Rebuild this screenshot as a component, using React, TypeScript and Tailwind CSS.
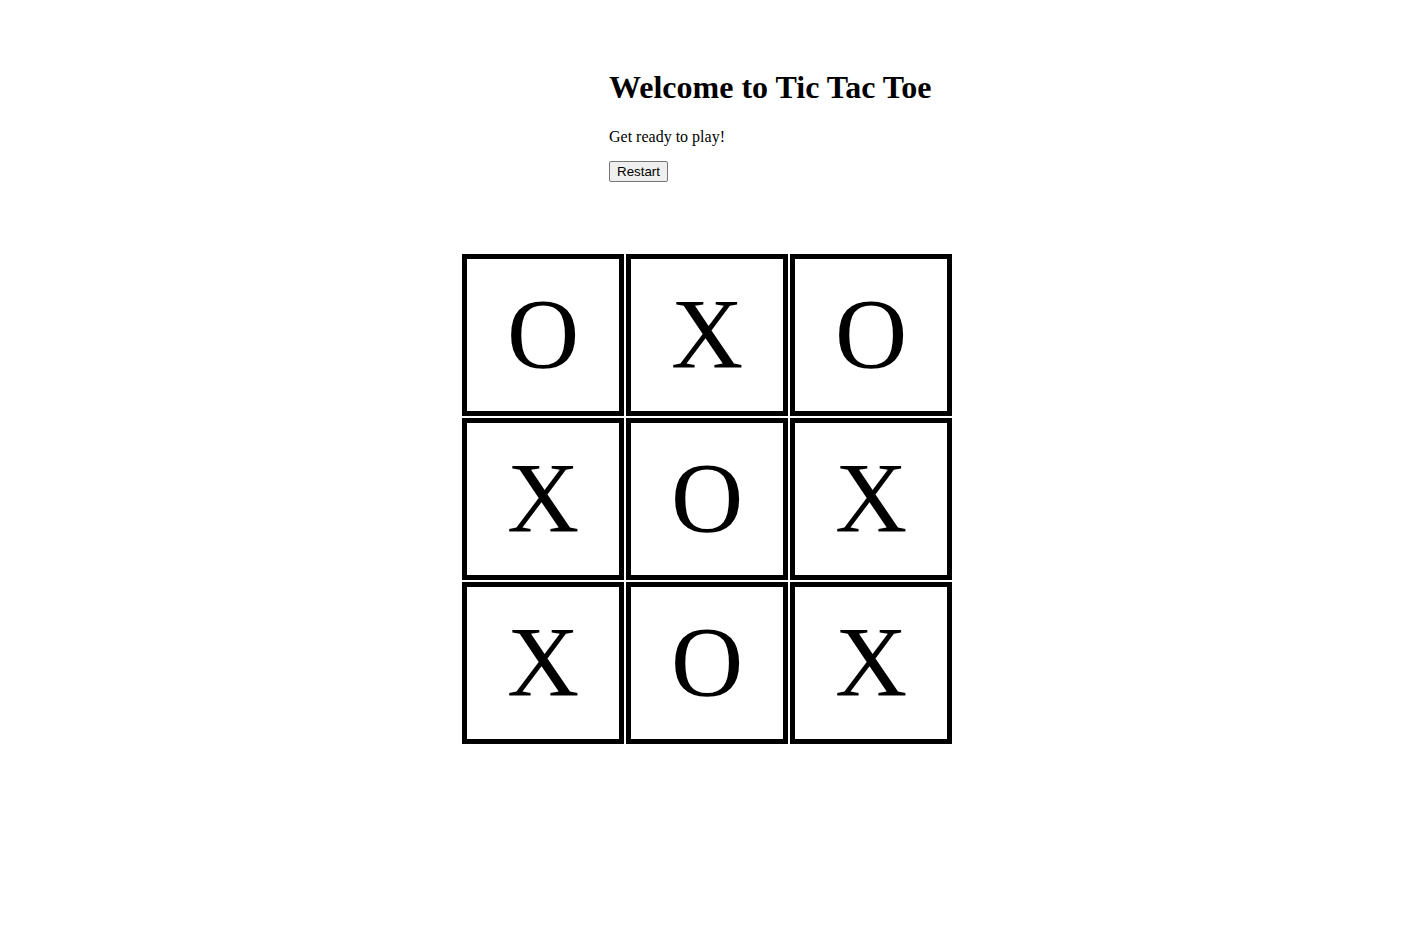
const BOARD = ['O', 'X', 'O', 'X', 'O', 'X', 'X', 'O', 'X']

export default function App() {
  return (
    <div className="min-h-screen bg-white text-black font-['Liberation_Serif','Times_New_Roman',serif]">
      {/* header block */}
      <div className="pl-[609px] pt-[69px]">
        <h1 className="text-[32px] font-bold leading-[37px]">Welcome to Tic Tac Toe</h1>
        <p className="mt-[22px] text-[16px] leading-[18px]">Get ready to play!</p>
        <button className="mt-[15px] h-[21px] rounded-[2px] border border-[#767676] bg-[#efefef] px-[7px] font-['Liberation_Sans',Arial,sans-serif] text-[13.33px] leading-[17px] text-black">
          Restart
        </button>
      </div>

      {/* board */}
      <div className="mt-[71px] flex justify-center">
        <div className="grid grid-cols-[162px_162px_162px] gap-[2px]">
          {BOARD.map((mark, i) => (
            <div
              key={i}
              className="flex h-[162px] w-[162px] items-center justify-center border-[5px] border-black text-[100px] leading-none"
            >
              <span className="-translate-y-px">{mark}</span>
            </div>
          ))}
        </div>
      </div>
    </div>
  )
}
